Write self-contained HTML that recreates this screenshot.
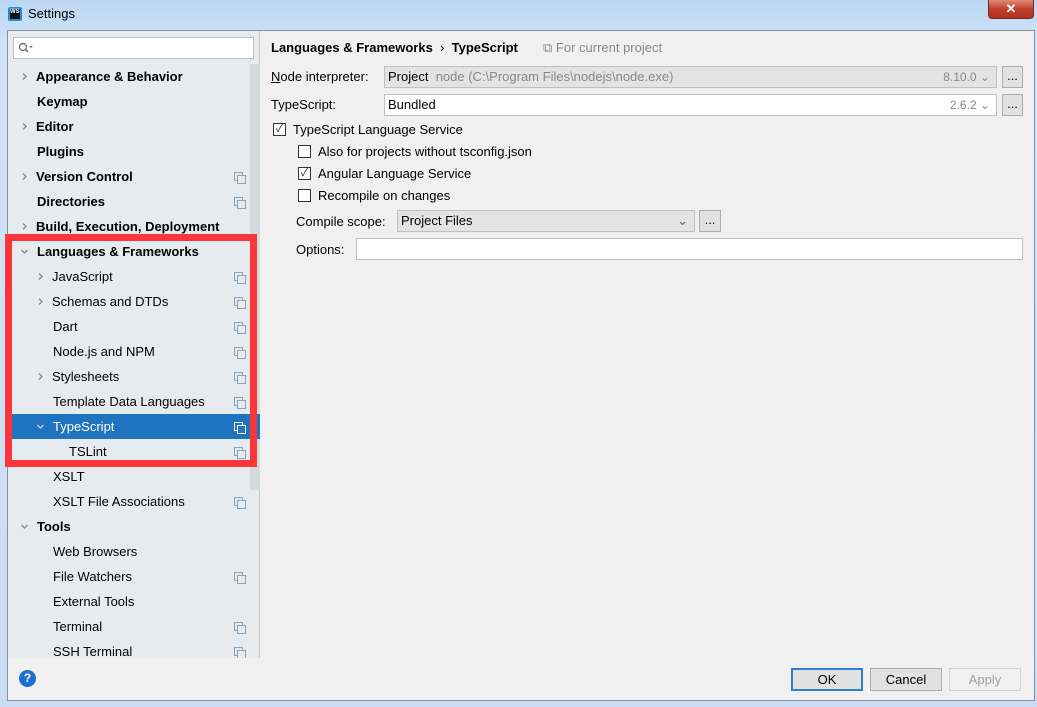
<!DOCTYPE html>
<html><head><meta charset="utf-8"><style>
*{margin:0;padding:0;box-sizing:border-box}
body{width:1037px;height:707px;overflow:hidden;background:linear-gradient(#bcd6f2,#cfe3f8 40px,#c9def5);font-family:"Liberation Sans","Noto Sans CJK SC",sans-serif;font-size:13px;color:#000;position:relative}
.a{position:absolute}
.win{left:7px;top:30px;width:1028px;height:671px;background:#f0f0f0;border:1px solid #8a9099}
.side{left:8px;top:31px;width:252px;height:627px;background:#e6ebf0;border-right:1px solid #c8c8c8}
.row{position:absolute;left:8px;width:252px;height:25px;line-height:25px;white-space:nowrap}
.b{font-weight:bold}
.arr{position:absolute;top:8px;width:9px;height:9px}
.ic{position:absolute;left:226px;top:8px;width:9px;height:9px;border:1px solid #8aa3b8}
.ic:after{content:"";position:absolute;left:2px;top:2px;width:7px;height:7px;border:1px solid #8aa3b8;background:#e6ebf0}
.sel .ic{border-color:#fff}.sel .ic:after{border-color:#fff;background:#1f74bf}
.inp{background:#fff;border:1px solid #c0c0c0;height:22px;line-height:20px;padding-left:3px}
.btn{background:#e1e1e1;border:1px solid #adadad;text-align:center}
.cb{width:13px;height:13px;border:1px solid #333;background:#fff;font-size:11px;line-height:11px;text-align:center;color:#333}
</style></head><body>
<svg width="0" height="0" style="position:absolute"><defs>
<symbol id="r" viewBox="0 0 9 9"><path d="M3 1.5 L6 4.5 L3 7.5" fill="none" stroke="#8c8c8c" stroke-width="1.4"/></symbol>
<symbol id="d" viewBox="0 0 9 9"><path d="M1.5 3 L4.5 6 L7.5 3" fill="none" stroke="#8c8c8c" stroke-width="1.4"/></symbol>
<symbol id="dw" viewBox="0 0 9 9"><path d="M1.5 3 L4.5 6 L7.5 3" fill="none" stroke="#bcd4ec" stroke-width="1.4"/></symbol>
</defs></svg>
<div class="a" style="left:8px;top:7px;width:14px;height:14px;background:#1e8fd9;border-radius:2px"><div class="a" style="left:2px;top:2px;width:10px;height:10px;background:#111;color:#fff;font-size:6px;font-weight:bold;line-height:7px">WS</div></div>
<div class="a" style="left:28px;top:6px;font-size:13px">Settings</div>
<div class="a" style="left:988px;top:0;width:46px;height:19px;background:linear-gradient(#e08a7a,#c0402c 50%,#b33120);border:1px solid #6b2b22;border-top:none;border-radius:0 0 4px 4px;color:#fff;text-align:center;font-weight:bold;font-size:13px;line-height:17px">✕</div>
<div class="a win"></div>
<div class="a side"></div>
<div class="a inp" style="left:13px;top:37px;width:241px;height:22px"><svg class="a" style="left:4px;top:4px" width="16" height="12"><circle cx="5" cy="5" r="3.5" fill="none" stroke="#777" stroke-width="1.4"/><path d="M7.5 7.5 L10 10" stroke="#777" stroke-width="1.6"/><path d="M11 4 L15 4 L13 6Z" fill="#777"/></svg></div>
<div class="a" style="left:250px;top:64px;width:10px;height:426px;background:#d4d9de"></div>

<div class="row b" style="top:64px"><svg class="arr" style="left:12px"><use href="#r"/></svg><span style="position:absolute;left:28px">Appearance &amp; Behavior</span></div>
<div class="row b" style="top:89px"><span style="position:absolute;left:29px">Keymap</span></div>
<div class="row b" style="top:114px"><svg class="arr" style="left:12px"><use href="#r"/></svg><span style="position:absolute;left:28px">Editor</span></div>
<div class="row b" style="top:139px"><span style="position:absolute;left:29px">Plugins</span></div>
<div class="row b" style="top:164px"><svg class="arr" style="left:12px"><use href="#r"/></svg><span style="position:absolute;left:28px">Version Control</span><i class="ic"></i></div>
<div class="row b" style="top:189px"><span style="position:absolute;left:29px">Directories</span><i class="ic"></i></div>
<div class="row b" style="top:214px"><svg class="arr" style="left:12px"><use href="#r"/></svg><span style="position:absolute;left:28px">Build, Execution, Deployment</span></div>
<div class="row b" style="top:239px"><svg class="arr" style="left:12px"><use href="#d"/></svg><span style="position:absolute;left:29px">Languages &amp; Frameworks</span></div>
<div class="row" style="top:264px"><svg class="arr" style="left:28px"><use href="#r"/></svg><span style="position:absolute;left:44px">JavaScript</span><i class="ic"></i></div>
<div class="row" style="top:289px"><svg class="arr" style="left:28px"><use href="#r"/></svg><span style="position:absolute;left:44px">Schemas and DTDs</span><i class="ic"></i></div>
<div class="row" style="top:314px"><span style="position:absolute;left:45px">Dart</span><i class="ic"></i></div>
<div class="row" style="top:339px"><span style="position:absolute;left:45px">Node.js and NPM</span><i class="ic"></i></div>
<div class="row" style="top:364px"><svg class="arr" style="left:28px"><use href="#r"/></svg><span style="position:absolute;left:44px">Stylesheets</span><i class="ic"></i></div>
<div class="row" style="top:389px"><span style="position:absolute;left:45px">Template Data Languages</span><i class="ic"></i></div>
<div class="row sel" style="top:414px;background:#1f74bf;color:#fff"><svg class="arr" style="left:28px"><use href="#dw"/></svg><span style="position:absolute;left:45px">TypeScript</span><i class="ic"></i></div>
<div class="row" style="top:439px"><span style="position:absolute;left:61px">TSLint</span><i class="ic"></i></div>
<div class="row" style="top:464px"><span style="position:absolute;left:45px">XSLT</span></div>
<div class="row" style="top:489px"><span style="position:absolute;left:45px">XSLT File Associations</span><i class="ic"></i></div>
<div class="row b" style="top:514px"><svg class="arr" style="left:12px"><use href="#d"/></svg><span style="position:absolute;left:29px">Tools</span></div>
<div class="row" style="top:539px"><span style="position:absolute;left:45px">Web Browsers</span></div>
<div class="row" style="top:564px"><span style="position:absolute;left:45px">File Watchers</span><i class="ic"></i></div>
<div class="row" style="top:589px"><span style="position:absolute;left:45px">External Tools</span></div>
<div class="row" style="top:614px"><span style="position:absolute;left:45px">Terminal</span><i class="ic"></i></div>
<div class="row" style="top:639px;height:19px;overflow:hidden"><span style="position:absolute;left:45px">SSH Terminal</span><i class="ic"></i></div>

<div class="a" style="left:5px;top:234px;width:252px;height:233px;border:7px solid #fb363a"></div>

<div class="a b" style="left:271px;top:40px">Languages &amp; Frameworks &nbsp;<span style="font-weight:normal">›</span>&nbsp; TypeScript</div>
<div class="a" style="left:543px;top:40px;color:#888">⧉ For current project</div>
<div class="a" style="left:271px;top:69px"><u>N</u>ode interpreter:</div>
<div class="a inp" style="left:384px;top:66px;width:613px;background:#e3e3e3">Project <span style="color:#888">&nbsp;node (C:\Program Files\nodejs\node.exe)</span><span class="a" style="right:6px;top:0;color:#888;font-size:12px">8.10.0 ⌄</span></div>
<div class="a btn" style="left:1002px;top:66px;width:21px;height:22px;line-height:18px">...</div>
<div class="a" style="left:271px;top:97px">TypeScript:</div>
<div class="a inp" style="left:384px;top:94px;width:613px">Bundled<span class="a" style="right:6px;top:0;color:#888;font-size:12px">2.6.2 ⌄</span></div>
<div class="a btn" style="left:1002px;top:94px;width:21px;height:22px;line-height:18px">...</div>
<div class="a cb" style="left:273px;top:123px">✓</div><div class="a" style="left:293px;top:122px">TypeScript Language Service</div>
<div class="a cb" style="left:298px;top:145px"></div><div class="a" style="left:318px;top:144px">Also for projects without tsconfig.json</div>
<div class="a cb" style="left:298px;top:167px">✓</div><div class="a" style="left:318px;top:166px">Angular Language Service</div>
<div class="a cb" style="left:298px;top:189px"></div><div class="a" style="left:318px;top:188px">Recompile on changes</div>
<div class="a" style="left:296px;top:214px">Compile scope:</div>
<div class="a inp" style="left:397px;top:210px;width:298px;background:#e3e3e3">Project Files<span class="a" style="right:6px;top:0;color:#666">⌄</span></div>
<div class="a btn" style="left:699px;top:210px;width:22px;height:22px;line-height:18px">...</div>
<div class="a" style="left:296px;top:242px">Options:</div>
<div class="a inp" style="left:356px;top:238px;width:667px"></div>

<div class="a" style="left:8px;top:658px;width:1026px;height:42px;background:#f0f0f0"></div>
<div class="a" style="left:19px;top:670px;width:17px;height:17px;border-radius:50%;background:#1a6fd0;color:#fff;font-size:12px;font-weight:bold;text-align:center;line-height:17px">?</div>
<div class="a btn" style="left:791px;top:668px;width:72px;height:23px;line-height:20px;border:2px solid #2b7fd4">OK</div>
<div class="a btn" style="left:870px;top:668px;width:72px;height:23px;line-height:21px">Cancel</div>
<div class="a btn" style="left:949px;top:668px;width:72px;height:23px;line-height:21px;color:#a0a0a0;background:#f0f0f0;border-color:#d0d0d0">Apply</div>
</body></html>
